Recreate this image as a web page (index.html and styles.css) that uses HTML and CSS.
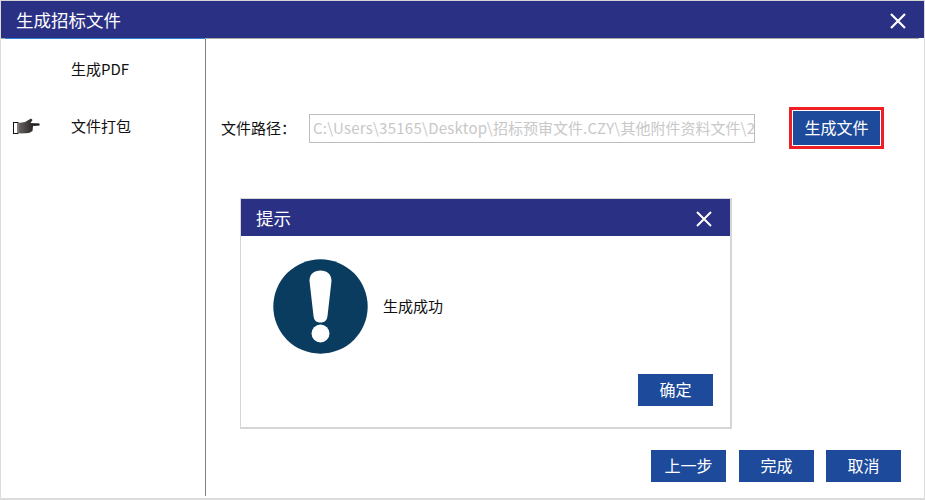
FILE: index.html
```html
<!DOCTYPE html>
<html lang="zh-CN">
<head>
<meta charset="utf-8">
<title>生成招标文件</title>
<link rel="stylesheet" href="styles.css">
</head>
<body>
<div class="window">
  <header class="titlebar">
    <h1 class="title">生成招标文件</h1>
    <svg class="close" width="18" height="18" viewBox="0 0 18 18"><path d="M2 2 L16 16 M16 2 L2 16" stroke="#fff" stroke-width="2.2" fill="none"/></svg>
  </header>
  <div class="main">
    <aside class="sidebar">
      <div class="step">
        <span class="step-mark"></span>
        <span class="step-label">生成PDF</span>
      </div>
      <div class="step step-active">
        <span class="step-mark">
          <svg width="27" height="16" viewBox="0 0 27 16">
            <defs><linearGradient id="hand" x1="0" x2="1" y1="0" y2="0"><stop offset="0" stop-color="#6a6362"/><stop offset="1" stop-color="#0d0b0b"/></linearGradient></defs>
            <rect x="0.5" y="4.500" width="4.500" height="11" fill="#fff" stroke="#111"/>
            <path d="M5.500 5 L12 4 L18 0.500 L19.500 2 L17.500 5 L26.500 5.500 L26.500 7.500 L20 8 L19.500 13 L16 15 L8 15.500 L5.500 15 Z" fill="url(#hand)"/>
          </svg>
        </span>
        <span class="step-label">文件打包</span>
      </div>
    </aside>
    <section class="content">
      <div class="path-row">
        <label class="path-label">文件路径：</label>
        <div class="path-input"><span class="latin">C:\Users\35165\Desktop\</span>招标预审文件<span class="latin">.CZY\</span>其他附件资料文件<span class="latin">\2</span></div>
        <div class="highlight"><button class="btn btn-generate">生成文件</button></div>
      </div>
      <div class="footer">
        <button class="btn">上一步</button>
        <button class="btn">完成</button>
        <button class="btn btn-last">取消</button>
      </div>
    </section>
  </div>
  <div class="dialog">
    <div class="dialog-head">
      <span class="dialog-title">提示</span>
      <svg class="dialog-close" width="18" height="18" viewBox="0 0 18 18"><path d="M2 2 L16 16 M16 2 L2 16" stroke="#fff" stroke-width="2" fill="none"/></svg>
    </div>
    <div class="dialog-body">
      <svg class="alert" width="95" height="95" viewBox="0 0 95 95">
        <circle cx="47.500" cy="47.500" r="47.200" fill="#0a3c60"/>
        <path d="M36.500 22 C36.500 15 41 11.500 47.500 11.500 C54 11.500 58.500 15 58.500 22 L54.500 57 C54 61.500 51.500 63.500 47.500 63.500 C43.500 63.500 41 61.500 40.500 57 Z" fill="#fff"/>
        <circle cx="47.500" cy="74.500" r="9" fill="#fff"/>
      </svg>
      <p class="dialog-msg">生成成功</p>
    </div>
    <div class="dialog-foot"><button class="btn">确定</button></div>
  </div>
</div>
</body>
</html>
```
FILE: styles.css
```css
* { box-sizing: border-box; }
html, body { margin: 0; padding: 0; }
body {
  width: 925px;
  height: 500px;
  overflow: hidden;
  background: #fff;
  font-family: "Noto Sans CJK SC", "Noto Sans", sans-serif;
  color: #111;
}
.window {
  position: relative;
  width: 925px;
  height: 500px;
  display: flex;
  flex-direction: column;
  border-top: 1px solid #d4d4d4;
  border-left: 1px solid #dcdcdc;
  border-right: 1px solid #dcdcdc;
  border-bottom: 2px solid #dcdcdc;
}
.titlebar {
  flex: none;
  height: 37px;
  display: flex;
  align-items: center;
  justify-content: space-between;
  padding: 0 17px 0 15px;
  background: #2a3084;
}
.title {
  margin: 0;
  font-size: 17.500px;
  font-weight: 400;
  color: #fff;
}
.close { margin-top: 2px; }
.main {
  flex: 1;
  display: flex;
  min-height: 0;
  margin-right: 5px;
  border-top: 1px solid #a9a9a9;
}
.sidebar {
  flex: none;
  width: 205px;
  height: 457px;
  padding-top: 18px;
  border-right: 1px solid #7f7f7f;
  position: relative;
}
.sidebar::before {
  content: "";
  position: absolute;
  left: 4px;
  right: 0;
  top: -1px;
  height: 1px;
  background: #2f7fd6;
}
.step {
  display: flex;
  align-items: center;
  height: 24px;
  margin-bottom: 33px;
}
.step-mark {
  flex: none;
  width: 70px;
  padding-left: 12px;
  display: flex;
}
.step-label { font-size: 15px; line-height: 24px; }
.content {
  flex: 1;
  display: flex;
  flex-direction: column;
  padding: 68px 17px 0 15px;
}
.path-row {
  display: flex;
  align-items: center;
  height: 42px;
}
.path-label {
  flex: none;
  width: 88px;
  font-size: 15px;
  margin-top: -2px;
}
.path-input {
  flex: none;
  width: 446px;
  height: 29px;
  padding-left: 3px;
  border: 1px solid #bdbdbd;
  color: #c8c8c8;
  font-size: 15px;
  line-height: 26px;
  white-space: nowrap;
  overflow: hidden;
}
.latin { letter-spacing: 0.25px; }
.highlight {
  flex: none;
  width: 95px;
  height: 42px;
  margin-left: 34px;
  padding: 1px;
  border: 3px solid #f01f25;
  background: #fff;
}
.btn {
  display: block;
  width: 75px;
  height: 32px;
  padding: 0 0 2px;
  border: 0;
  background: #1d4a9a;
  color: #fff;
  font: 400 16px/30px "Noto Sans CJK SC", sans-serif;
}
.btn-generate { width: 87px; height: 34px; }
.footer {
  display: flex;
  justify-content: flex-end;
  gap: 13px;
  margin-top: 301px;
  margin-right: 1px;
}
.btn-last { margin-left: -1px; }
.dialog {
  position: absolute;
  left: 239px;
  top: 197px;
  width: 492px;
  height: 231px;
  display: flex;
  flex-direction: column;
  background: #fff;
  border: 2px solid #d6d6d6;
  border-left-width: 1px;
  border-top-width: 1px;
}
.dialog-head {
  flex: none;
  height: 37px;
  display: flex;
  align-items: center;
  justify-content: space-between;
  padding: 0 16px 0 15px;
  background: #2a3084;
  color: #fff;
}
.dialog-title { font-size: 17.500px; }
.dialog-close { margin: 2px 1px 0 0; }
.dialog-body {
  flex: 1;
  display: flex;
  align-items: center;
  padding: 0 0 0 32px;
  height: 138px;
}
.alert { flex: none; margin-top: 2px; }
.dialog-msg {
  margin: 0 0 0 15px;
  font-size: 15px;
}
.dialog-foot {
  flex: none;
  display: flex;
  justify-content: flex-end;
  padding: 0 17px 21px 0;
}
```
